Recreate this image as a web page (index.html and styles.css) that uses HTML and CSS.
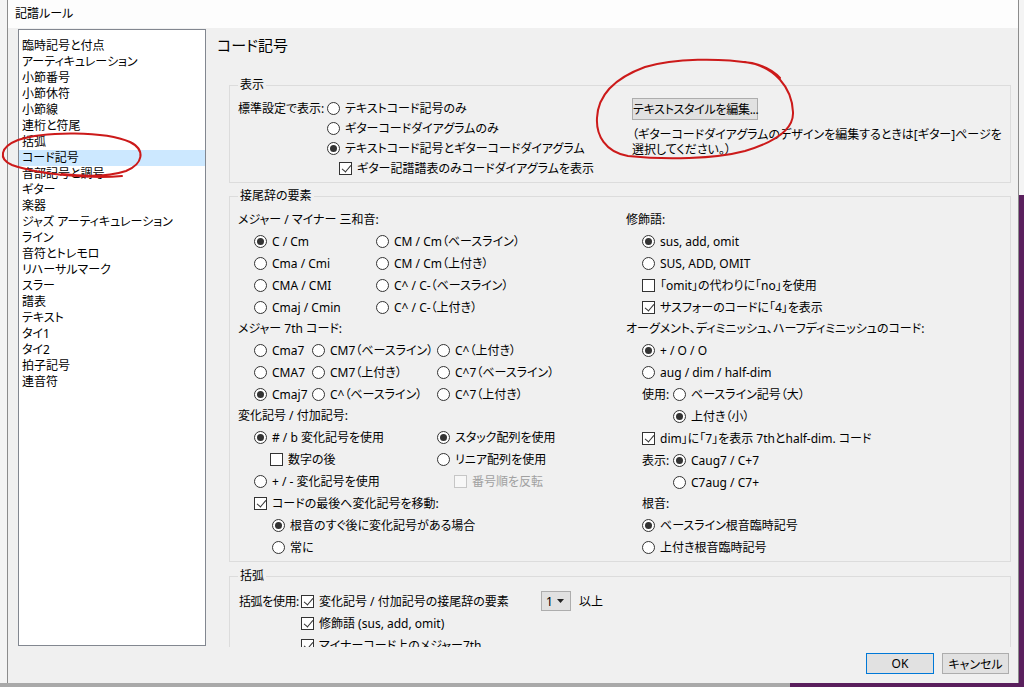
FILE: index.html
```html
<!DOCTYPE html>
<html lang="ja">
<head>
<meta charset="utf-8">
<title>記譜ルール</title>
<link rel="stylesheet" href="styles.css">
</head>
<body>
<div class="screen">
  <div class="window">
    <div class="titlebar">記譜ルール</div>
    <div class="client">
      <div class="main">
        <ul class="list">
          <li>臨時記号と付点</li>
          <li>アーティキュレーション</li>
          <li>小節番号</li>
          <li>小節休符</li>
          <li>小節線</li>
          <li>連桁と符尾</li>
          <li>括弧</li>
          <li class="sel">コード記号</li>
          <li>音部記号と調号</li>
          <li>ギター</li>
          <li>楽器</li>
          <li>ジャズ アーティキュレーション</li>
          <li>ライン</li>
          <li>音符とトレモロ</li>
          <li>リハーサルマーク</li>
          <li>スラー</li>
          <li>譜表</li>
          <li>テキスト</li>
          <li>タイ1</li>
          <li>タイ2</li>
          <li>拍子記号</li>
          <li>連音符</li>
        </ul>
        <div class="panel">
          <h1 class="page-title">コード記号</h1>
          <div class="viewport">
            <div class="content">
              <fieldset class="group g-display">
                <legend>表示</legend>
                <div class="display">
                  <div class="display-left">
                    <div class="drow"><span class="lbl w-std">標準設定で表示:</span><label class="opt"><span class="rb"></span>テキストコード記号のみ</label></div>
                    <div class="drow in-std"><label class="opt"><span class="rb"></span>ギターコードダイアグラムのみ</label></div>
                    <div class="drow in-std"><label class="opt"><span class="rb on"></span>テキストコード記号とギターコードダイアグラム</label></div>
                    <div class="drow in-std2"><label class="opt"><span class="cb on"></span>ギター記譜譜表のみコードダイアグラムを表示</label></div>
                  </div>
                  <div class="display-right">
                    <button class="btn style-btn">テキストスタイルを編集...</button>
                    <p class="note">（ギターコードダイアグラムのデザインを編集するときは[ギター]ページを<br>選択してください。）</p>
                  </div>
                </div>
              </fieldset>

              <fieldset class="group g-suffix">
                <legend>接尾辞の要素</legend>
                <div class="suffix">
                  <div class="col-left">
                    <div class="hd">メジャー / マイナー 三和音:</div>
                    <div class="row grid-triad"><label class="opt"><span class="rb on"></span>C / Cm</label><label class="opt"><span class="rb"></span>CM / Cm（ベースライン）</label></div>
                    <div class="row grid-triad"><label class="opt"><span class="rb"></span>Cma / Cmi</label><label class="opt"><span class="rb"></span>CM / Cm（上付き）</label></div>
                    <div class="row grid-triad"><label class="opt"><span class="rb"></span>CMA / CMI</label><label class="opt"><span class="rb"></span>C^ / C-（ベースライン）</label></div>
                    <div class="row grid-triad"><label class="opt"><span class="rb"></span>Cmaj / Cmin</label><label class="opt"><span class="rb"></span>C^ / C-（上付き）</label></div>

                    <div class="hd">メジャー 7th コード:</div>
                    <div class="row grid-seventh"><label class="opt"><span class="rb"></span>Cma7</label><label class="opt"><span class="rb"></span>CM7（ベースライン）</label><label class="opt"><span class="rb"></span>C^（上付き）</label></div>
                    <div class="row grid-seventh"><label class="opt"><span class="rb"></span>CMA7</label><label class="opt"><span class="rb"></span>CM7（上付き）</label><label class="opt"><span class="rb"></span>C^7（ベースライン）</label></div>
                    <div class="row grid-seventh"><label class="opt"><span class="rb on"></span>Cmaj7</label><label class="opt"><span class="rb"></span>C^（ベースライン）</label><label class="opt"><span class="rb"></span>C^7（上付き）</label></div>

                    <div class="hd">変化記号 / 付加記号:</div>
                    <div class="row grid-acc"><label class="opt"><span class="rb on"></span># / b 変化記号を使用</label><label class="opt"><span class="rb on"></span>スタック配列を使用</label></div>
                    <div class="row grid-acc"><label class="opt sub1"><span class="cb"></span>数字の後</label><label class="opt"><span class="rb"></span>リニア配列を使用</label></div>
                    <div class="row grid-acc"><label class="opt"><span class="rb"></span>+ / - 変化記号を使用</label><label class="opt sub2 disabled"><span class="cb"></span>番号順を反転</label></div>
                    <div class="row in1"><label class="opt"><span class="cb on"></span>コードの最後へ変化記号を移動:</label></div>
                    <div class="row in3"><label class="opt"><span class="rb on"></span>根音のすぐ後に変化記号がある場合</label></div>
                    <div class="row in3"><label class="opt"><span class="rb"></span>常に</label></div>
                  </div>

                  <div class="col-right">
                    <div class="hd">修飾語:</div>
                    <div class="row in1"><label class="opt"><span class="rb on"></span>sus, add, omit</label></div>
                    <div class="row in1"><label class="opt"><span class="rb"></span>SUS, ADD, OMIT</label></div>
                    <div class="row in1"><label class="opt"><span class="cb"></span>「omit」の代わりに「no」を使用</label></div>
                    <div class="row in1"><label class="opt"><span class="cb on"></span>サスフォーのコードに「4」を表示</label></div>

                    <div class="hd">オーグメント、ディミニッシュ、ハーフディミニッシュのコード:</div>
                    <div class="row in1"><label class="opt"><span class="rb on"></span>+ / O / O</label></div>
                    <div class="row in1"><label class="opt"><span class="rb"></span>aug / dim / half-dim</label></div>
                    <div class="row in1"><span class="lbl w-use">使用:</span><label class="opt"><span class="rb"></span>ベースライン記号（大）</label></div>
                    <div class="row in2"><label class="opt"><span class="rb on"></span>上付き（小）</label></div>
                    <div class="row in1"><label class="opt"><span class="cb on"></span>dim」に「7」を表示 7thとhalf-dim. コード</label></div>
                    <div class="row in1"><span class="lbl w-use">表示:</span><label class="opt"><span class="rb on"></span>Caug7 / C+7</label></div>
                    <div class="row in2"><label class="opt"><span class="rb"></span>C7aug / C7+</label></div>

                    <div class="hd in1">根音:</div>
                    <div class="row in1"><label class="opt"><span class="rb on"></span>ベースライン根音臨時記号</label></div>
                    <div class="row in1"><label class="opt"><span class="rb"></span>上付き根音臨時記号</label></div>
                  </div>
                </div>
              </fieldset>

              <fieldset class="group g-paren">
                <legend>括弧</legend>
                <div class="row"><span class="lbl w-paren">括弧を使用:</span><label class="opt w-accopt"><span class="cb on"></span>変化記号 / 付加記号の接尾辞の要素</label><span class="combo"><span>1</span><svg width="7" height="4" viewBox="0 0 7 4"><path d="M0 0H7L3.5 4Z" fill="#222"/></svg></span><span class="lbl after">以上</span></div>
                <div class="row in-paren"><label class="opt"><span class="cb on"></span>修飾語 (sus, add, omit)</label></div>
                <div class="row in-paren"><label class="opt"><span class="cb on"></span>マイナーコード上のメジャー7th</label></div>
              </fieldset>
            </div>
            <div class="scrollbar">
              <div class="sb-btn"><svg width="17" height="17" viewBox="0 0 17 17"><polyline points="4.5,11 8,7.5 11.5,11" fill="none" stroke="#606060" stroke-width="1.2"/></svg></div>
              <div class="sb-track"><div class="sb-thumb"></div></div>
              <div class="sb-btn"><svg width="17" height="17" viewBox="0 0 17 17"><polyline points="4.5,6.5 8,10 11.5,6.5" fill="none" stroke="#606060" stroke-width="1.2"/></svg></div>
            </div>
          </div>
        </div>
      </div>
      <div class="footer">
        <button class="btn ok">OK</button>
        <button class="btn cancel">キャンセル</button>
      </div>
    </div>
  </div>
  <svg class="annotations" width="1024" height="687" viewBox="0 0 1024 687">
    <path d="M 122 176 C 95 179, 40 175, 12 165 C -2 159, 0 147, 18 140 C 45 131, 105 131, 130 142 C 146 150, 143 164, 126 171 C 105 178, 80 176, 62 174" />
    <path d="M 745 62 C 775 66, 792 88, 793 112 C 794 130, 775 142, 745 151 C 715 159, 665 160, 628 156 C 605 152, 596 135, 597 118 C 598 95, 615 78, 645 67 C 675 58, 720 58, 752 63 C 765 66, 775 72, 780 78" />
  </svg>
</div>
</body>
</html>
```

FILE: styles.css
```css
* { box-sizing: border-box; }
html, body { margin: 0; padding: 0; }
body {
  width: 1024px;
  height: 687px;
  overflow: hidden;
  font-family: "Noto Sans", "Noto Sans CJK JP", sans-serif;
  font-size: 12px;
  color: #000;
  font-feature-settings: "palt";
}
.screen {
  position: relative;
  width: 1024px;
  height: 687px;
  padding-left: 7px;
  background:
    linear-gradient(#5a1f5d, #5a1f5d) right 0 bottom 0 / 234px 4px no-repeat,
    linear-gradient(#5a1f5d, #5a1f5d) right 0 top 195px / 5px 492px no-repeat,
    linear-gradient(#a9a9a9, #a9a9a9) left 0 bottom 0 / 790px 4px no-repeat,
    #f4f4f4;
}
.window {
  width: 1012px;
  height: 683px;
  border-left: 1px solid #8c8c8c;
  border-right: 1px solid #8c8c8c;
  background: #f0f0f0;
  display: flex;
  flex-direction: column;
}
.titlebar {
  height: 28px;
  line-height: 27px;
  padding-left: 7px;
  background: #fdfdfd;
  flex: none;
}
.client { flex: 1; display: flex; flex-direction: column; }
.main {
  display: flex;
  padding: 1px 0 0 10px;
  height: 619px;
}
.list {
  list-style: none;
  margin: 0;
  padding: 8px 0 0 0;
  width: 188px;
  height: 617px;
  border: 1px solid #828790;
  background: #fff;
}
.list li {
  height: 16px;
  line-height: 16px;
  padding-left: 3px;
  white-space: nowrap;
}
.list li.sel { background: #cce8ff; }

.panel {
  margin-left: 10px;
  width: 795px;
  display: flex;
  flex-direction: column;
}
.page-title {
  font-size: 15px;
  font-weight: normal;
  line-height: 20px;
  margin: 6px 0 9px 1px;
}
.viewport {
  display: flex;
  height: 583px;
  overflow: hidden;
}
.content {
  flex: 1;
  padding: 14px 10px 0 13px;
}
.scrollbar {
  width: 17px;
  display: flex;
  flex-direction: column;
  background: #f0f0f0;
}
.sb-btn { height: 17px; flex: none; }
.sb-btn svg { display: block; }
.sb-track { flex: 1; padding: 1px 2px 0 2px; }
.sb-thumb {
  position: relative;
  height: 504px;
  background: #cdcdcd;
}
.sb-thumb::after {
  content: "";
  position: absolute;
  left: 2px;
  top: 248px;
  width: 9px;
  height: 8px;
  background: #ececec;
}

/* group boxes */
.group {
  margin: 0;
  min-width: 0;
  border: 1px solid #dcdcdc;
  padding: 6px 8px 4px 8px;
}
.group legend {
  padding: 0 2px;
  line-height: 14px;
  height: 14px;
}
.g-suffix { margin-top: 6px; padding-top: 6px; padding-bottom: 3px; }
.g-paren { margin-top: 7px; padding-top: 7px; }

.opt {
  display: inline-flex;
  align-items: center;
  white-space: nowrap;
}
.lbl { white-space: nowrap; display: inline-block; }
.rb {
  width: 13px;
  height: 13px;
  border: 1px solid #333;
  border-radius: 50%;
  background: #fff;
  margin-right: 5px;
  display: inline-flex;
  align-items: center;
  justify-content: center;
  flex: none;
}
.rb.on::after {
  content: "";
  width: 7px;
  height: 7px;
  border-radius: 50%;
  background: #333;
}
.cb {
  position: relative;
  width: 13px;
  height: 13px;
  border: 1px solid #333;
  background: #fff;
  margin-right: 5px;
  flex: none;
}
.cb.on::after {
  content: "";
  position: absolute;
  left: 3.5px;
  top: 0.5px;
  width: 4px;
  height: 8px;
  border: solid #333;
  border-width: 0 1px 1px 0;
  transform: rotate(40deg);
}
.disabled { color: #a0a0a0; }
.disabled .cb { border-color: #c6c6c6; background: #f7f7f7; }

/* display group */
.display { display: flex; }
.display-left { width: 394px; flex: none; }
.drow { height: 20px; display: flex; align-items: center; }
.w-std { width: 89px; }
.in-std { padding-left: 89px; }
.in-std2 { padding-left: 101px; }
.btn {
  font: inherit;
  color: #000;
  background: #e1e1e1;
  border: 1px solid #adadad;
  padding: 0;
  margin: 0;
  white-space: nowrap;
}
.style-btn {
  width: 126px;
  height: 22px;
  display: block;
  letter-spacing: -0.3px;
}
.note {
  margin: 7px 0 0 0;
  line-height: 15px;
  white-space: nowrap;
}

/* suffix group */
.suffix { display: flex; }
.col-left { width: 388px; flex: none; }
.col-right { flex: 1; }
.hd { height: 21px; line-height: 21px; white-space: nowrap; }
.row { height: 22px; display: flex; align-items: center; }
.grid-triad { display: grid; grid-template-columns: 122px auto; padding-left: 16px; }
.grid-seventh { display: grid; grid-template-columns: 58px 125px auto; padding-left: 16px; }
.grid-acc { display: grid; grid-template-columns: 183px auto; padding-left: 16px; }
.sub1 { padding-left: 16px; }
.sub2 { padding-left: 17px; }
.in1 { padding-left: 16px; }
.in2 { padding-left: 47px; }
.in3 { padding-left: 34px; }
.w-use { width: 31px; }

/* paren group */
.w-paren { width: 63px; padding-left: 1px; letter-spacing: -0.4px; }
.w-accopt { width: 240px; }
.combo {
  width: 30px;
  height: 20px;
  background: #e1e1e1;
  border: 1px solid #adadad;
  display: flex;
  align-items: center;
  justify-content: space-between;
  padding: 0 6px 0 4px;
}
.combo svg { display: block; }
.after { margin-left: 8px; }
.in-paren { padding-left: 63px; }

/* footer */
.footer {
  flex: 1;
  display: flex;
  justify-content: flex-end;
  align-items: flex-start;
  gap: 8px;
  padding: 6px 9px 0 0;
}
.footer .btn { height: 21px; }
.ok { width: 68px; border-color: #0078d7; }
.cancel { width: 67px; }

/* annotations */
.annotations {
  position: absolute;
  left: 0;
  top: 0;
  pointer-events: none;
}
.annotations path {
  fill: none;
  stroke: #cc1a1a;
  stroke-width: 2;
  stroke-linecap: round;
  stroke-linejoin: round;
}
```
